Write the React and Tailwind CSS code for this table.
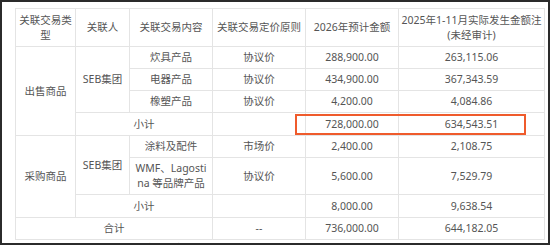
import React from "react";

const cell = "border border-[#e4e4e4] text-center align-middle p-0";

export default function App() {
  return (
    <div
      className="relative w-[550px] h-[245px] border-2 border-[#2b2b2b] bg-white overflow-hidden text-[#555] text-[10.5px] leading-[15px]"
      style={{ fontFamily: '"Noto Sans", "Noto Sans CJK SC", sans-serif' }}
    >
      <div className="pl-[13px] pt-[6px]">
        <table className="table-fixed border-collapse w-[529px]">
          <colgroup>
            <col className="w-[60px]" />
            <col className="w-[54px]" />
            <col className="w-[83px]" />
            <col className="w-[93px]" />
            <col className="w-[93px]" />
            <col className="w-[146px]" />
          </colgroup>
          <tbody>
            <tr className="h-[38px]">
              <td className={cell}>关联交易类<br />型</td>
              <td className={cell}>关联人</td>
              <td className={cell}>关联交易内容</td>
              <td className={cell + " whitespace-nowrap"}>关联交易定价原则</td>
              <td className={cell}>2026年预计金额</td>
              <td className={cell + " whitespace-nowrap"}>2025年1-11月实际发生金额注<br />(未经审计)</td>
            </tr>
            <tr className="h-[22px]">
              <td className={cell} rowSpan={4}>出售商品</td>
              <td className={cell} rowSpan={3}>SEB集团</td>
              <td className={cell}>炊具产品</td>
              <td className={cell}>协议价</td>
              <td className={cell}>288,900.00</td>
              <td className={cell}>263,115.06</td>
            </tr>
            <tr className="h-[22px]">
              <td className={cell}>电器产品</td>
              <td className={cell}>协议价</td>
              <td className={cell}>434,900.00</td>
              <td className={cell}>367,343.59</td>
            </tr>
            <tr className="h-[22px]">
              <td className={cell}>橡塑产品</td>
              <td className={cell}>协议价</td>
              <td className={cell}>4,200.00</td>
              <td className={cell}>4,084.86</td>
            </tr>
            <tr className="h-[23px]">
              <td className={cell} colSpan={2}>小计</td>
              <td className={cell}></td>
              <td className={cell}>728,000.00</td>
              <td className={cell}>634,543.51</td>
            </tr>
            <tr className="h-[22px]">
              <td className={cell} rowSpan={3}>采购商品</td>
              <td className={cell} rowSpan={2}>SEB集团</td>
              <td className={cell}>涂料及配件</td>
              <td className={cell}>市场价</td>
              <td className={cell}>2,400.00</td>
              <td className={cell}>2,108.75</td>
            </tr>
            <tr className="h-[37px]">
              <td className={cell}>WMF、Lagosti<br />na 等品牌产品</td>
              <td className={cell}>协议价</td>
              <td className={cell}>5,600.00</td>
              <td className={cell}>7,529.79</td>
            </tr>
            <tr className="h-[23px]">
              <td className={cell} colSpan={2}>小计</td>
              <td className={cell}></td>
              <td className={cell}>8,000.00</td>
              <td className={cell}>9,638.54</td>
            </tr>
            <tr className="h-[22px]">
              <td className={cell} colSpan={3}>合计</td>
              <td className={cell}>--</td>
              <td className={cell}>736,000.00</td>
              <td className={cell}>644,182.05</td>
            </tr>
          </tbody>
        </table>
        <p className="mt-[1px] text-[#333] whitespace-nowrap">
          注：2025年1-11月实际发生金额未经审计，最终数据以公司2025年年度报告披露为准。
        </p>
      </div>
      <div className="absolute left-[293px] top-[112px] w-[231px] h-[21px] border-2 border-[#ef5b2c]" />
    </div>
  );
}
